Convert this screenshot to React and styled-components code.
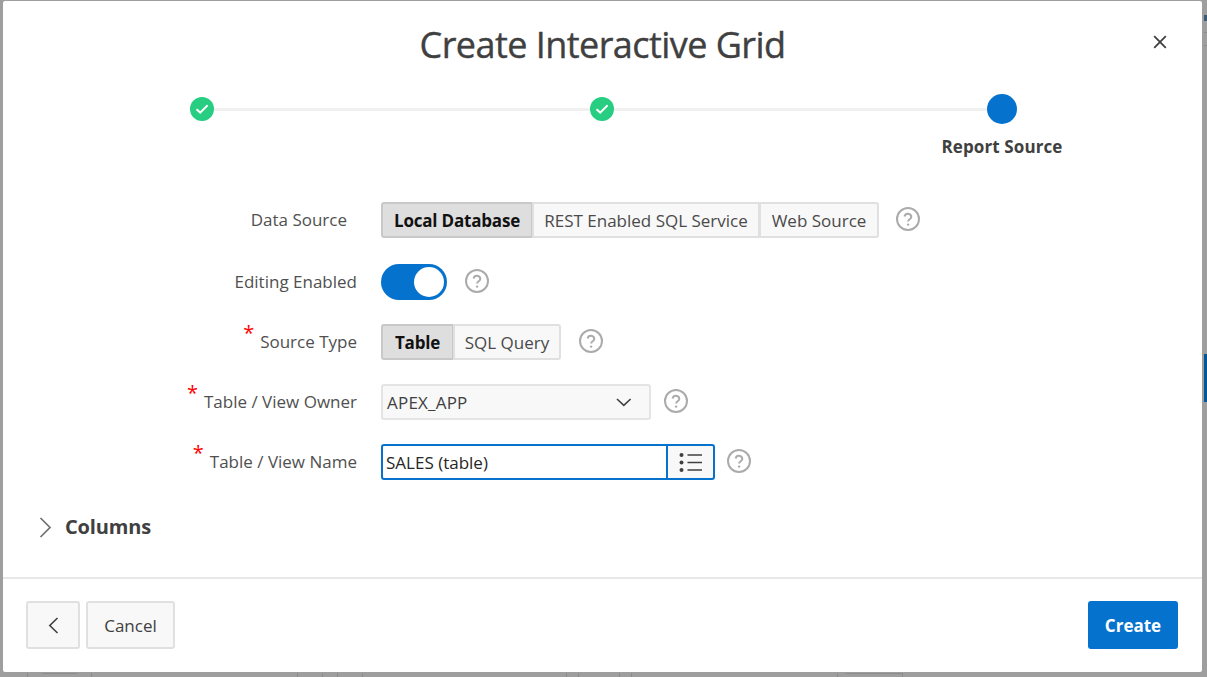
import React from 'react';
import styled, { createGlobalStyle } from 'styled-components';

const GlobalStyle = createGlobalStyle`
  html, body {
    margin: 0;
    padding: 0;
    height: 100%;
    overflow: hidden;
    background: #9e9e9e;
    font-family: "Open Sans", "Noto Sans", "Liberation Sans", sans-serif;
    color: #404040;
  }
  * { box-sizing: border-box; }
`;

const Page = styled.div`
  position: relative;
  width: 1207px;
  height: 677px;
  padding: 1px 5px 5px 3px;
  overflow: hidden;
`;

// bits of the page behind the dialog that show through the overlay
const BackdropTab = styled.div`
  position: absolute;
  right: 0;
  top: 354px;
  width: 3px;
  height: 48px;
  background: #035797;
`;

const BackdropTick = styled.span`
  position: absolute;
  bottom: 0;
  left: ${({ $left }) => $left}px;
  width: ${({ $width }) => $width || 1}px;
  height: 4px;
  background: ${({ $width }) => ($width ? 'none' : '#8c8c8c')};
  border-top: ${({ $width }) => ($width ? '1px solid #8c8c8c' : '0')};
`;

const BackdropMark = styled.span`
  position: absolute;
  right: 0;
  top: ${({ $top }) => $top}px;
  width: 3px;
  height: ${({ $height }) => $height}px;
  background: ${({ $color }) => $color};
`;

const Dialog = styled.div`
  position: relative;
  display: flex;
  flex-direction: column;
  width: 1199px;
  height: 671px;
  background: #fff;
  border-radius: 2px;
`;

const Header = styled.header`
  display: flex;
  align-items: flex-start;
  justify-content: center;
  height: 93px;
  position: relative;
`;

const Title = styled.h1`
  margin: 21px 0 0;
  font-size: 36px;
  line-height: 46px;
  font-weight: 500;
  letter-spacing: -0.55px;
  -webkit-text-stroke: 0.4px #404040;
  color: #404040;
`;

const CloseButton = styled.button`
  position: absolute;
  top: 32px;
  right: 33px;
  width: 18px;
  height: 18px;
  padding: 0;
  display: flex;
  align-items: center;
  justify-content: center;
  border: 0;
  background: none;
  color: #404040;
`;

const Stepper = styled.div`
  display: flex;
  flex-direction: column;
`;

const Track = styled.div`
  display: flex;
  align-items: center;
  height: 30px;
  padding-left: 187px;
`;

const Dot = styled.span`
  flex: none;
  display: flex;
  align-items: center;
  justify-content: center;
  width: ${({ $size }) => $size}px;
  height: ${({ $size }) => $size}px;
  border-radius: 50%;
  background: ${({ $color }) => $color};
`;

const Line = styled.span`
  flex: none;
  width: ${({ $width }) => $width}px;
  height: 3px;
  background: #f0f0f0;
`;

const StepLabel = styled.div`
  width: 140px;
  margin: 11px 0 0 929px;
  font-size: 17px;
  line-height: 24px;
  font-weight: 700;
  letter-spacing: 0.1px;
  text-align: center;
  white-space: nowrap;
  color: #404040;
`;

const Form = styled.div`
  display: flex;
  flex-direction: column;
  margin-top: 43px;
`;

const Row = styled.div`
  display: flex;
  align-items: center;
  height: 36px;
  margin-top: ${({ $top }) => $top || 0}px;
`;

const LabelCell = styled.div`
  flex: none;
  width: 354px;
  padding-right: ${({ $pad }) => $pad || 0}px;
  text-align: right;
  font-size: 17px;
  line-height: 22px;
  white-space: nowrap;
  color: #505050;
`;

const Required = styled.span`
  color: #f00;
  font-size: 20px;
  line-height: 0;
  vertical-align: 8px;
  margin-right: 6px;
`;

const Control = styled.div`
  flex: none;
  display: flex;
  align-items: center;
  margin-left: 24px;
`;

const Segments = styled.div`
  display: flex;
`;

const Segment = styled.button`
  width: ${({ $width }) => $width}px;
  height: 36px;
  padding: 0;
  margin-left: ${({ $first }) => ($first ? 0 : -1)}px;
  font-family: inherit;
  font-size: 17px;
  letter-spacing: ${({ $active }) => ($active ? '-0.2px' : '0')};
  white-space: nowrap;
  font-weight: ${({ $active }) => ($active ? 700 : 400)};
  color: ${({ $active }) => ($active ? '#111' : '#4a4a4a')};
  background: ${({ $active }) => ($active ? '#dedede' : '#f8f8f8')};
  border: 2px solid ${({ $active }) => ($active ? '#c8c8c8' : '#e0e0e0')};
  border-radius: ${({ $first, $last }) =>
    `${$first ? 3 : 0}px ${$last ? 3 : 0}px ${$last ? 3 : 0}px ${$first ? 3 : 0}px`};
`;

const Toggle = styled.div`
  display: flex;
  align-items: center;
  justify-content: flex-end;
  width: 66px;
  height: 36px;
  padding-right: 3px;
  border-radius: 18px;
  background: #0572ce;
`;

const Knob = styled.span`
  width: 30px;
  height: 30px;
  border-radius: 50%;
  background: #fff;
`;

const Select = styled.div`
  display: flex;
  align-items: center;
  justify-content: space-between;
  width: 270px;
  height: 36px;
  padding: 0 17px 0 4px;
  background: #f8f8f8;
  border: 2px solid #e4e4e4;
  border-radius: 3px;
  font-size: 17px;
  letter-spacing: 0.2px;
  color: #404040;
`;

const InputGroup = styled.div`
  display: flex;
`;

const TextInput = styled.div`
  display: flex;
  align-items: center;
  width: 287px;
  height: 36px;
  padding-left: 3px;
  background: #fff;
  border: 2px solid #0572ce;
  border-radius: 3px 0 0 3px;
  font-size: 17px;
  color: #262626;
`;

const ListButton = styled.button`
  display: flex;
  align-items: center;
  justify-content: center;
  width: 48px;
  height: 36px;
  padding: 0;
  margin-left: -1px;
  background: #f8f8f8;
  border: 2px solid #0572ce;
  border-left-width: 1px;
  border-radius: 0 3px 3px 0;
`;

const HelpIcon = styled.svg`
  flex: none;
  width: 26px;
  height: 26px;
  margin: -2px 0 0 ${({ $gap }) => $gap}px;
  color: #ababab;
`;

const Collapsible = styled.div`
  display: flex;
  align-items: center;
  gap: 13px;
  height: 24px;
  margin: 35px 0 0 36px;
`;

const CollapsibleTitle = styled.span`
  font-size: 20px;
  line-height: 24px;
  font-weight: 700;
  letter-spacing: -0.15px;
  color: #404040;
`;

const Footer = styled.footer`
  display: flex;
  align-items: flex-start;
  justify-content: space-between;
  margin-top: auto;
  height: 95px;
  padding: 22px 24px 0 23px;
  border-top: 2px solid #e8e8e8;
`;

const FooterGroup = styled.div`
  display: flex;
  gap: 6px;
`;

const FooterButton = styled.button`
  display: flex;
  align-items: center;
  justify-content: center;
  width: ${({ $width }) => $width}px;
  height: 48px;
  padding: 0;
  font-family: inherit;
  font-size: 17px;
  font-weight: ${({ $primary }) => ($primary ? 700 : 400)};
  color: ${({ $primary }) => ($primary ? '#fff' : '#404040')};
  background: ${({ $primary }) => ($primary ? '#0572ce' : '#f8f8f8')};
  border: ${({ $primary }) => ($primary ? '0' : '2px solid #e0e0e0')};
  border-radius: 3px;
`;

const Help = ({ gap }) => (
  <HelpIcon $gap={gap} viewBox="0 0 26 26" fill="none" stroke="currentColor">
    <circle cx="13" cy="13" r="11" strokeWidth="2" />
    <path d="M9.6 10.4a3.4 3.4 0 0 1 6.7.6c0 2.1-3.2 2.4-3.2 4.4" strokeWidth="2" />
    <circle cx="13.1" cy="18.6" r="1.2" fill="currentColor" stroke="none" />
  </HelpIcon>
);

const Check = () => (
  <svg width="14" height="12" viewBox="0 0 14 12" fill="none" stroke="#fff" strokeWidth="2">
    <path d="M1.5 6.2 5.2 9.6 12.6 2.2" />
  </svg>
);

const Chevron = ({ d, w, h, color = '#404040', sw = 1.6 }) => (
  <svg width={w} height={h} viewBox={`0 0 ${w} ${h}`} fill="none" stroke={color} strokeWidth={sw}>
    <path d={d} />
  </svg>
);

const ticks = [
  { left: 27 }, { left: 42, width: 35 }, { left: 91 }, { left: 297 }, { left: 322 },
  { left: 337 }, { left: 362 }, { left: 566 }, { left: 578 }, { left: 619 }, { left: 631 },
  { left: 837 }, { left: 846, width: 56 }, { left: 902 },
];

export default function App() {
  return (
    <>
      <GlobalStyle />
      <Page>
        <BackdropTab />
        <BackdropMark $top={15} $height={6} $color="#3a5a78" />
        <BackdropMark $top={32} $height={1} $color="#8c8c8c" />
        <BackdropMark $top={45} $height={1} $color="#8c8c8c" />
        {ticks.map((t) => (
          <BackdropTick key={t.left} $left={t.left} $width={t.width} />
        ))}
        <Dialog>
          <Header>
            <Title>Create Interactive Grid</Title>
            <CloseButton aria-label="Close">
              <svg width="14" height="14" viewBox="0 0 14 14" fill="none" stroke="currentColor" strokeWidth="1.8">
                <path d="M1.2 1.2 12.8 12.8M12.8 1.2 1.2 12.8" />
              </svg>
            </CloseButton>
          </Header>

          <Stepper>
            <Track>
              <Dot $size={24} $color="#27cd80"><Check /></Dot>
              <Line $width={376} />
              <Dot $size={24} $color="#27cd80"><Check /></Dot>
              <Line $width={373} />
              <Dot $size={30} $color="#0572ce" />
            </Track>
            <StepLabel>Report Source</StepLabel>
          </Stepper>

          <Form>
            <Row>
              <LabelCell $pad={10}>Data Source</LabelCell>
              <Control>
                <Segments>
                  <Segment $first $active $width={152}>Local Database</Segment>
                  <Segment $width={228}>REST Enabled SQL Service</Segment>
                  <Segment $last $width={120}>Web Source</Segment>
                </Segments>
                <Help gap={16} />
              </Control>
            </Row>
            <Row $top={26}>
              <LabelCell>Editing Enabled</LabelCell>
              <Control>
                <Toggle><Knob /></Toggle>
                <Help gap={17} />
              </Control>
            </Row>
            <Row $top={24}>
              <LabelCell><Required>*</Required>Source Type</LabelCell>
              <Control>
                <Segments>
                  <Segment $first $active $width={73}>Table</Segment>
                  <Segment $last $width={108}>SQL Query</Segment>
                </Segments>
                <Help gap={17} />
              </Control>
            </Row>
            <Row $top={24}>
              <LabelCell><Required>*</Required>Table / View Owner</LabelCell>
              <Control>
                <Select>
                  APEX_APP
                  <Chevron d="M1 1l6.8 6.4L14.6 1" w={16} h={9} />
                </Select>
                <Help gap={12} />
              </Control>
            </Row>
            <Row $top={24}>
              <LabelCell><Required>*</Required>Table / View Name</LabelCell>
              <Control>
                <InputGroup>
                  <TextInput>SALES (table)</TextInput>
                  <ListButton aria-label="List">
                    <svg width="23" height="19" viewBox="0 0 23 19" fill="#404040" stroke="none">
                      <circle cx="2.5" cy="2" r="2" />
                      <circle cx="2.5" cy="9.5" r="2" />
                      <circle cx="2.5" cy="17" r="2" />
                      <path d="M8.5 1.3H23v1.4H8.5zM8.5 8.8H23v1.4H8.5zM8.5 16.3H23v1.4H8.5z" />
                    </svg>
                  </ListButton>
                </InputGroup>
                <Help gap={11} />
              </Control>
            </Row>
          </Form>

          <Collapsible>
            <Chevron d="M1.5 1 11 10.5 1.5 20" w={13} h={21} color="#707070" sw={1.7} />
            <CollapsibleTitle>Columns</CollapsibleTitle>
          </Collapsible>

          <Footer>
            <FooterGroup>
              <FooterButton $width={54} aria-label="Back">
                <Chevron d="M9.5 1 1.8 8.5 9.5 16" w={11} h={17} />
              </FooterButton>
              <FooterButton $width={89}>Cancel</FooterButton>
            </FooterGroup>
            <FooterButton $primary $width={90}>Create</FooterButton>
          </Footer>
        </Dialog>
      </Page>
    </>
  );
}
